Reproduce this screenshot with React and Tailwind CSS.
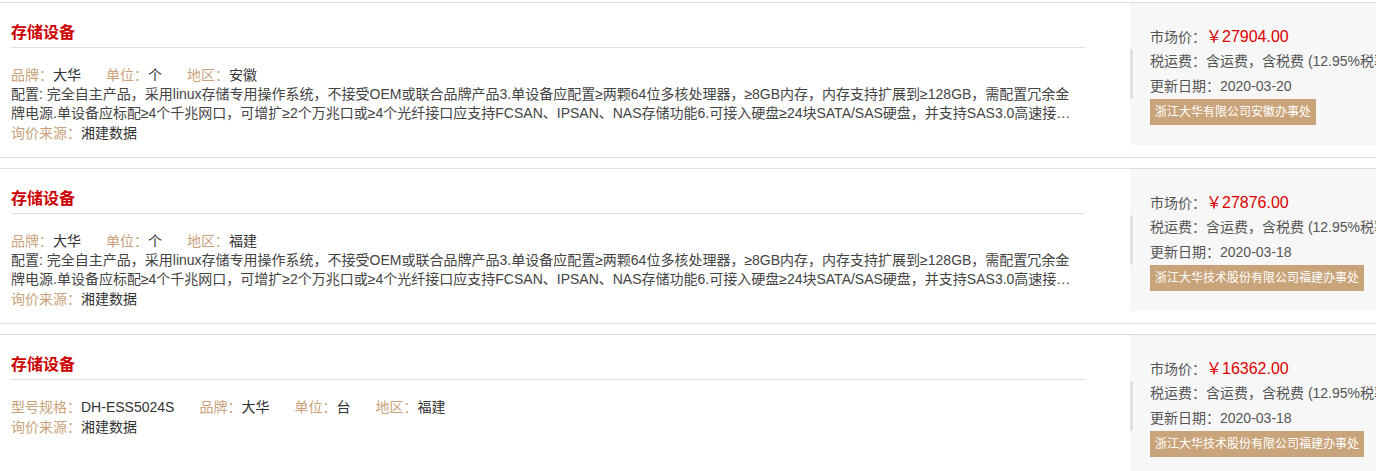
const items = [
  {
    title: '存储设备',
    fields: [
      ['品牌', '大华'],
      ['单位', '个'],
      ['地区', '安徽'],
    ],
    config:
      '配置: 完全自主产品，采用linux存储专用操作系统，不接受OEM或联合品牌产品3.单设备应配置≥两颗64位多核处理器，≥8GB内存，内存支持扩展到≥128GB，需配置冗余金牌电源.单设备应标配≥4个千兆网口，可增扩≥2个万兆口或≥4个光纤接口应支持FCSAN、IPSAN、NAS存储功能6.可接入硬盘≥24块SATA/SAS硬盘，并支持SAS3.0高速接口，支持RAID0、1、5、6、10、50、60',
    source: '湘建数据',
    price: '￥27904.00',
    tax: '含运费，含税费 (12.95%税率)',
    date: '2020-03-20',
    vendor: '浙江大华有限公司安徽办事处',
  },
  {
    title: '存储设备',
    fields: [
      ['品牌', '大华'],
      ['单位', '个'],
      ['地区', '福建'],
    ],
    config:
      '配置: 完全自主产品，采用linux存储专用操作系统，不接受OEM或联合品牌产品3.单设备应配置≥两颗64位多核处理器，≥8GB内存，内存支持扩展到≥128GB，需配置冗余金牌电源.单设备应标配≥4个千兆网口，可增扩≥2个万兆口或≥4个光纤接口应支持FCSAN、IPSAN、NAS存储功能6.可接入硬盘≥24块SATA/SAS硬盘，并支持SAS3.0高速接口，支持RAID0、1、5、6、10、50、60',
    source: '湘建数据',
    price: '￥27876.00',
    tax: '含运费，含税费 (12.95%税率)',
    date: '2020-03-18',
    vendor: '浙江大华技术股份有限公司福建办事处',
  },
  {
    title: '存储设备',
    fields: [
      ['型号规格', 'DH-ESS5024S'],
      ['品牌', '大华'],
      ['单位', '台'],
      ['地区', '福建'],
    ],
    config: null,
    source: '湘建数据',
    price: '￥16362.00',
    tax: '含运费，含税费 (12.95%税率)',
    date: '2020-03-18',
    vendor: '浙江大华技术股份有限公司福建办事处',
  },
];

function PriceCard({ item }) {
  return (
    <div className="mb-[10px] border-y border-[#dddddd] pb-[12px]">
      <div className="flex h-[142px] overflow-hidden">
        <div className="min-w-0 flex-1 pl-[11px] pr-[45px]">
          <h3 className="mt-[18px] border-b border-[#dddddd] pb-[2px] text-[16px] font-bold leading-[24px] text-[#cc0000]">
            {item.title}
          </h3>
          <div className="mt-[17px] flex h-[20px] text-[14px] leading-[20px]">
            {item.fields.map(([label, value]) => (
              <span key={label} className="mr-[25px] whitespace-nowrap">
                <span className="text-[#c9a27c]">{label}：</span>
                <span className="text-[#333333]">{value}</span>
              </span>
            ))}
          </div>
          {item.config ? (
            <p className="line-clamp-2 h-[38px] pr-[10px] text-[14px] leading-[19px] text-[#444444]">
              {item.config}
            </p>
          ) : null}
          <p className="mt-[1px] h-[19px] whitespace-nowrap text-[14px] leading-[19px]">
            <span className="text-[#c9a27c]">询价来源：</span>
            <span className="text-[#333333]">{item.source}</span>
          </p>
        </div>

        <div className="relative w-[246px] shrink-0 overflow-hidden whitespace-nowrap bg-[#f7f7f7] pl-[20px] pt-[21px] text-[14px] leading-[25px] text-[#555555]">
          <div className="absolute left-0 top-[46px] h-[50px] w-[3px] rounded-sm bg-[#e2e2e2]" />
          <p className="h-[25px]">
            市场价：<span className="text-[16px] text-[#dd0000]">{item.price}</span>
          </p>
          <p className="h-[25px]">税运费：{item.tax}</p>
          <p className="h-[25px]">更新日期：{item.date}</p>
          <span className="inline-block h-[26px] bg-[#c9a47a] px-[5px] text-[12px] leading-[26px] text-white">
            {item.vendor}
          </span>
        </div>
      </div>
    </div>
  );
}

export default function App() {
  return (
    <div
      className="h-[471px] overflow-hidden bg-white pt-[2px]"
      style={{ fontFamily: '"Liberation Sans", "Noto Sans CJK SC", sans-serif' }}
    >
      {items.map((item, i) => (
        <PriceCard key={i} item={item} />
      ))}
    </div>
  );
}
